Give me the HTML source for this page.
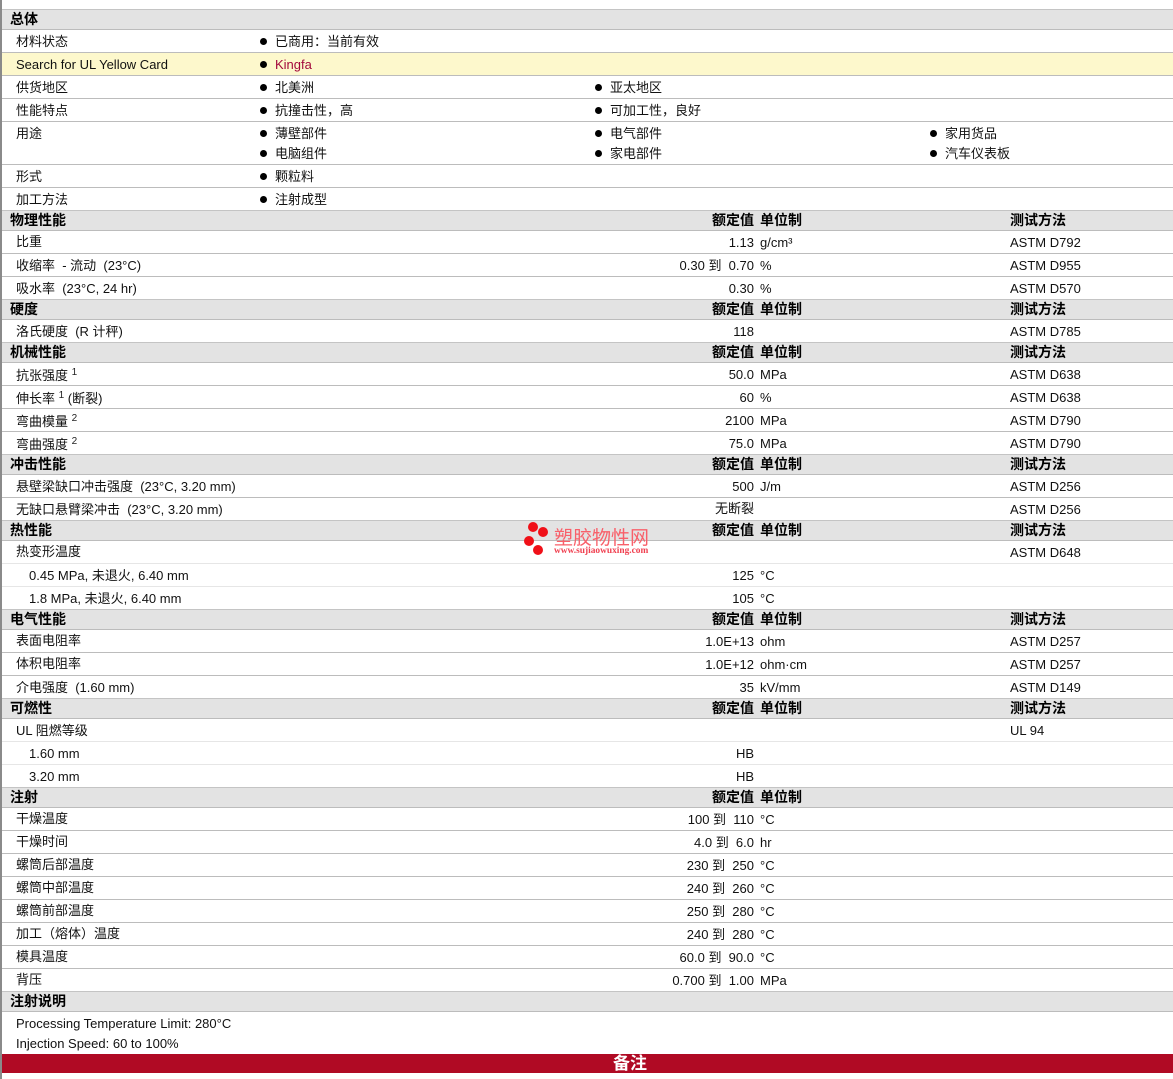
<!DOCTYPE html>
<html lang="zh"><head><meta charset="utf-8"><title>总体</title>
<style>
html,body{margin:0;padding:0;background:#fff}
body{width:1173px;height:1079px;position:relative;overflow:hidden;font:13px/20px "Liberation Sans","Noto Sans CJK SC",sans-serif;color:#111}
#lb{position:absolute;left:0;top:0;width:2px;height:1079px;background:#8a8a8a}
.r{position:absolute;left:2px;width:1171px;height:23px;box-sizing:border-box;border-top:1px solid #bcbcbc;background:#fff}
.r.l{border-top-color:#e6e6e6}
.r.h{height:20px;background:#e3e3e3;border-top-color:#c4c4c4;font-weight:bold;font-size:14px;color:#000}
.r.y{background:#fdf8cc}
.r span{position:absolute;top:2px;white-space:pre;line-height:20px}
.r.h span{top:-1px}
.r .a{left:14px}.r .s{left:27px}.r .t{left:8px}
.r .v{right:419px}.r .u{left:758px}.r .m{left:1008px}
.r .c1{left:273px}.r .c2{left:608px}.r .c3{left:943px}
.r .n2{top:22px}
.r .up{top:1px}.r .dn{top:3px}
.c1::before,.c2::before,.c3::before{content:"";position:absolute;left:-15px;top:6px;width:7px;height:7px;border-radius:50%;background:#000}
sup{font-size:10px;line-height:0;position:relative;top:0;vertical-align:super;color:#222}
#foot{position:absolute;left:2px;top:1054px;width:1171px;height:19px;background:#b00a24;color:#fff;font-weight:bold;font-size:17px;line-height:19px}
#foot span{position:absolute;left:611px;top:0}
#wm{position:absolute;left:0;top:0;width:1px;height:1px}
#wm i{position:absolute;border-radius:50%;background:#f01018;width:10px;height:10px}
#wm b{position:absolute;white-space:nowrap}
</style></head><body>
<div class="r h" style="top:9px"><span class="t">总体</span></div>
<div class="r" style="top:29px"><span class="a">材料状态</span><span class="c1">已商用：当前有效</span></div>
<div class="r y" style="top:52px"><span class="a">Search for UL Yellow Card</span><span class="c1" style="color:#a3083c">Kingfa</span></div>
<div class="r" style="top:75px"><span class="a">供货地区</span><span class="c1">北美洲</span><span class="c2">亚太地区</span></div>
<div class="r" style="top:98px"><span class="a">性能特点</span><span class="c1">抗撞击性，高</span><span class="c2">可加工性，良好</span></div>
<div class="r" style="top:121px;height:43px"><span class="a">用途</span><span class="c1">薄壁部件</span><span class="c2">电气部件</span><span class="c3">家用货品</span><span class="c1 n2">电脑组件</span><span class="c2 n2">家电部件</span><span class="c3 n2">汽车仪表板</span></div>
<div class="r" style="top:164px"><span class="a">形式</span><span class="c1">颗粒料</span></div>
<div class="r" style="top:187px"><span class="a">加工方法</span><span class="c1">注射成型</span></div>

<div class="r h" style="top:210px"><span class="t">物理性能</span><span class="v">额定值</span><span class="u">单位制</span><span class="m">测试方法</span></div>
<div class="r" style="top:230px"><span class="a up">比重</span><span class="v">1.13</span><span class="u">g/cm³</span><span class="m">ASTM D792</span></div>
<div class="r" style="top:253px"><span class="a">收缩率  - 流动  (23°C)</span><span class="v">0.30 到  0.70</span><span class="u">%</span><span class="m">ASTM D955</span></div>
<div class="r" style="top:276px"><span class="a">吸水率  (23°C, 24 hr)</span><span class="v">0.30</span><span class="u">%</span><span class="m">ASTM D570</span></div>

<div class="r h" style="top:299px"><span class="t">硬度</span><span class="v">额定值</span><span class="u">单位制</span><span class="m">测试方法</span></div>
<div class="r" style="top:319px"><span class="a">洛氏硬度  (R 计秤)</span><span class="v">118</span><span class="m">ASTM D785</span></div>

<div class="r h" style="top:342px"><span class="t">机械性能</span><span class="v">额定值</span><span class="u">单位制</span><span class="m">测试方法</span></div>
<div class="r" style="top:362px"><span class="a dn">抗张强度 <sup>1</sup></span><span class="v">50.0</span><span class="u">MPa</span><span class="m">ASTM D638</span></div>
<div class="r" style="top:385px"><span class="a dn">伸长率 <sup>1</sup> (断裂)</span><span class="v">60</span><span class="u">%</span><span class="m">ASTM D638</span></div>
<div class="r" style="top:408px"><span class="a dn">弯曲模量 <sup>2</sup></span><span class="v">2100</span><span class="u">MPa</span><span class="m">ASTM D790</span></div>
<div class="r" style="top:431px"><span class="a dn">弯曲强度 <sup>2</sup></span><span class="v">75.0</span><span class="u">MPa</span><span class="m">ASTM D790</span></div>

<div class="r h" style="top:454px"><span class="t">冲击性能</span><span class="v">额定值</span><span class="u">单位制</span><span class="m">测试方法</span></div>
<div class="r" style="top:474px"><span class="a">悬壁梁缺口冲击强度  (23°C, 3.20 mm)</span><span class="v">500</span><span class="u">J/m</span><span class="m">ASTM D256</span></div>
<div class="r" style="top:497px"><span class="a">无缺口悬臂梁冲击  (23°C, 3.20 mm)</span><span class="v up">无断裂</span><span class="m">ASTM D256</span></div>

<div class="r h" style="top:520px"><span class="t">热性能</span><span class="v">额定值</span><span class="u">单位制</span><span class="m">测试方法</span></div>
<div class="r" style="top:540px"><span class="a up">热变形温度</span><span class="m">ASTM D648</span></div>
<div class="r l" style="top:563px"><span class="s">0.45 MPa, 未退火, 6.40 mm</span><span class="v">125</span><span class="u">°C</span></div>
<div class="r l" style="top:586px"><span class="s">1.8 MPa, 未退火, 6.40 mm</span><span class="v">105</span><span class="u">°C</span></div>

<div class="r h" style="top:609px"><span class="t">电气性能</span><span class="v">额定值</span><span class="u">单位制</span><span class="m">测试方法</span></div>
<div class="r" style="top:629px"><span class="a up">表面电阻率</span><span class="v">1.0E+13</span><span class="u">ohm</span><span class="m">ASTM D257</span></div>
<div class="r" style="top:652px"><span class="a up">体积电阻率</span><span class="v">1.0E+12</span><span class="u">ohm·cm</span><span class="m">ASTM D257</span></div>
<div class="r" style="top:675px"><span class="a">介电强度  (1.60 mm)</span><span class="v">35</span><span class="u">kV/mm</span><span class="m">ASTM D149</span></div>

<div class="r h" style="top:698px"><span class="t">可燃性</span><span class="v">额定值</span><span class="u">单位制</span><span class="m">测试方法</span></div>
<div class="r" style="top:718px"><span class="a">UL 阻燃等级</span><span class="m">UL 94</span></div>
<div class="r l" style="top:741px"><span class="s">1.60 mm</span><span class="v">HB</span></div>
<div class="r l" style="top:764px"><span class="s">3.20 mm</span><span class="v">HB</span></div>

<div class="r h" style="top:787px"><span class="t">注射</span><span class="v">额定值</span><span class="u">单位制</span></div>
<div class="r" style="top:807px"><span class="a up">干燥温度</span><span class="v">100 到  110</span><span class="u">°C</span></div>
<div class="r" style="top:830px"><span class="a up">干燥时间</span><span class="v">4.0 到  6.0</span><span class="u">hr</span></div>
<div class="r" style="top:853px"><span class="a up">螺筒后部温度</span><span class="v">230 到  250</span><span class="u">°C</span></div>
<div class="r" style="top:876px"><span class="a up">螺筒中部温度</span><span class="v">240 到  260</span><span class="u">°C</span></div>
<div class="r" style="top:899px"><span class="a up">螺筒前部温度</span><span class="v">250 到  280</span><span class="u">°C</span></div>
<div class="r" style="top:922px"><span class="a up">加工（熔体）温度</span><span class="v">240 到  280</span><span class="u">°C</span></div>
<div class="r" style="top:945px"><span class="a up">模具温度</span><span class="v">60.0 到  90.0</span><span class="u">°C</span></div>
<div class="r" style="top:968px"><span class="a up">背压</span><span class="v">0.700 到  1.00</span><span class="u">MPa</span></div>

<div class="r h" style="top:991px"><span class="t">注射说明</span></div>
<div class="r" style="top:1011px;height:43px"><span class="a">Processing Temperature Limit: 280°C</span><span class="a n2">Injection Speed: 60 to 100%</span></div>
<div id="foot"><span>备注</span></div>

<div id="wm">
<i style="left:528px;top:522px"></i><i style="left:538px;top:527px"></i><i style="left:524px;top:536px"></i><i style="left:533px;top:545px"></i>
<b style="left:554px;top:526px;font:400 19px/22px 'Noto Sans CJK SC',sans-serif;color:#f8606a">塑胶物性网</b>
<b style="left:554px;top:546px;font:bold 9.4px/11px 'Liberation Serif',serif;color:#f04050">www.sujiaowuxing.com</b>
</div>
<div id="lb"></div>
</body></html>
